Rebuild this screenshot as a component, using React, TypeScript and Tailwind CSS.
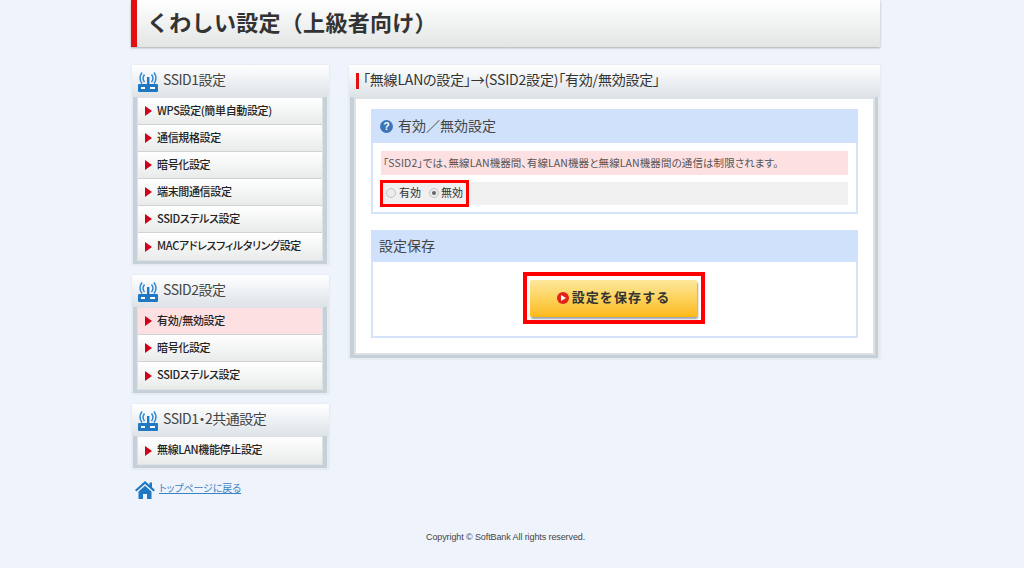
import React from "react";

const font = { fontFamily: '"Noto Sans CJK JP", "Liberation Sans", sans-serif' };

function RouterIcon() {
  return (
    <svg width="20" height="20" viewBox="0 0 20 20" className="shrink-0 mt-[1px]">
      <rect x="0" y="12" width="20" height="8" rx="1" fill="#1f78c4" />
      <rect x="3" y="15" width="4" height="2" fill="#fff" />
      <rect x="12" y="15" width="5" height="2" fill="#fff" />
      <rect x="9" y="5" width="2.4" height="7" fill="#1f78c4" />
      <path d="M5.5 2.5C3.5 5 3.5 7.5 5.5 10M3 0.5C0.5 4 0.5 8 3 11.5" fill="none" stroke="#2f8ad6" strokeWidth="1.5" transform="translate(1 0)" />
      <path d="M14.5 2.5C16.5 5 16.5 7.5 14.5 10M17 0.5C19.5 4 19.5 8 17 11.5" fill="none" stroke="#2f8ad6" strokeWidth="1.5" transform="translate(-1 0)" />
    </svg>
  );
}

function MenuItem({ label, active, last }: { label: string; active?: boolean; last?: boolean }) {
  return (
    <div
      className={`h-[27px] flex items-center pl-[7px] gap-[5px] text-[11px] font-medium text-[#222] tracking-[-0.35px] [font-feature-settings:'palt'] ${
        last ? "" : "border-b border-[#cfd3d6]"
      } ${active ? "bg-[#fde0e2]" : "bg-gradient-to-b from-white to-[#e9ebeb]"}`}
    >
      <span className="w-0 h-0 border-y-[5px] border-y-transparent border-l-[7px] border-l-[#d0021b]" />
      <span className="pb-[2px]">{label}</span>
    </div>
  );
}

function SideGroup({ title, items, activeIndex }: { title: string; items: string[]; activeIndex?: number }) {
  return (
    <div className="w-[197px] rounded-t-[2px] bg-[#e6ebf0] shadow-[0_0_2px_#d5dbe3]">
      <div className="h-[32px] flex items-center pl-[6px] gap-[5px] bg-gradient-to-b from-white to-[#dde3e8] text-[14px] text-[#444] tracking-[-0.5px] [font-feature-settings:'palt']">
        <RouterIcon />
        <span className="pb-[3px]">{title}</span>
      </div>
      <div className="ml-[1px] mr-[2px] pl-[4px] pr-[4px] pb-[3px] bg-[#c5d0d9] mb-[1px]">
        <div className="border border-[#dfe2e4] bg-white">
          {items.map((it, i) => (
            <MenuItem key={it} label={it} active={i === activeIndex} last={i === items.length - 1} />
          ))}
        </div>
      </div>
    </div>
  );
}

function BlueHeader({ children, h }: { children: React.ReactNode; h: string }) {
  return <div className={`${h} bg-[#d0e2fb] flex items-center text-[14px] text-[#444]`}>{children}</div>;
}

export default function App() {
  return (
    <div className="w-[1024px] h-[568px] overflow-hidden bg-[#eff3fb]" style={font}>
      <div className="ml-[131px] w-[749px] h-[47px] flex items-center border-l-[6px] border-[#e30f0f] bg-gradient-to-b from-white to-[#e3e5e5] shadow-[0_1px_2px_#a9adb1]">
        <h1 className="ml-[10px] pb-[5px] text-[22px] font-bold leading-none text-[#333] tracking-[0.3px]">くわしい設定（上級者向け）</h1>
      </div>

      <div className="ml-[132px] mt-[18px] flex gap-[20px] items-start">
        <div className="w-[197px] flex flex-col gap-[10px]">
          <SideGroup
            title="SSID1設定"
            items={["WPS設定(簡単自動設定)", "通信規格設定", "暗号化設定", "端末間通信設定", "SSIDステルス設定", "MACアドレスフィルタリング設定"]}
          />
          <SideGroup title="SSID2設定" items={["有効/無効設定", "暗号化設定", "SSIDステルス設定"]} activeIndex={0} />
          <SideGroup title="SSID1・2共通設定" items={["無線LAN機能停止設定"]} />
          <div className="flex items-center gap-[4px] ml-[3px] mt-[2px]">
            <svg width="20" height="18" viewBox="0 0 20 18" className="shrink-0">
              <path d="M10 0L0 9l1.4 1.6L10 3l8.6 7.6L20 9l-3-2.7V1.5h-2.5v2.6z" fill="#1f78c4" />
              <path d="M3.5 10.5L10 4.8l6.5 5.7V18H12v-5H8v5H3.5z" fill="#1f78c4" />
            </svg>
            <a className="text-[10px] text-[#3c83c4] underline tracking-[-0.1px] -mt-[5px] [font-feature-settings:'palt']">トップページに戻る</a>
          </div>
        </div>

        <div className="w-[531px] rounded-t-[2px] bg-[#e6ebf0] shadow-[0_0_2px_#d5dbe3]">
          <div className="h-[32px] flex items-center pl-[7px] bg-gradient-to-b from-white to-[#dde3e8] text-[14px] text-[#333] tracking-[-0.2px] [font-feature-settings:'palt']">
            <span className="w-[3px] h-[16px] bg-[#e30f0f] mr-[4px]" />
            <span className="pb-[3px]">「無線LANの設定」→(SSID2設定)「有効/無効設定」</span>
          </div>
          <div className="ml-[1px] mr-[2px] pl-[4px] pr-[3px] pb-[3px] mb-[1px] bg-[#c5d0d9]">
            <div className="border-[2px] border-[#dfe2e4] bg-white px-[15px] pt-[10px] pb-[15px] h-[258px]">
              <div className="border-[2px] border-t-0 border-[#d5e4fa] h-[105px]">
                <BlueHeader h="h-[34px] -mx-[2px]">
                  <svg width="13" height="13" viewBox="0 0 13 13" className="ml-[9px] mr-[5px] shrink-0">
                    <circle cx="6.5" cy="6.5" r="6.5" fill="#3b74b8" />
                    <text x="6.5" y="10" fontSize="10" fontWeight="700" fill="#fff" textAnchor="middle" fontFamily="Liberation Sans">?</text>
                  </svg>
                  <span className="pb-[2px]">有効／無効設定</span>
                </BlueHeader>
                <div className="mx-[8px] mt-[8px] h-[24px] bg-[#fde0e2] flex items-center pl-[2px] text-[10.5px] text-[#555] tracking-[0.1px] [font-feature-settings:'palt']">
                  <span className="pb-[1px]">「SSID2」では、無線LAN機器間、有線LAN機器と無線LAN機器間の通信は制限されます。</span>
                </div>
                <div className="mx-[8px] mt-[7px] h-[23px] bg-[#f0f0f0] flex items-center">
                  <div className="h-[27px] w-[89px] -ml-[1px] border-[3px] border-[#ff0000] flex items-center pl-[3px] text-[11px] text-[#333]">
                    <span className="w-[10px] h-[10px] rounded-full border border-[#c4c4c4] bg-[#ececec] mr-[3px] -mt-[1px]" />
                    <span className="pb-[2px]">有効</span>
                    <span className="ml-[8px] w-[10px] h-[10px] rounded-full border border-[#c4c4c4] bg-[#ececec] mr-[2px] -mt-[1px] flex items-center justify-center">
                      <span className="w-[4px] h-[4px] rounded-full bg-[#666]" />
                    </span>
                    <span className="pb-[2px]">無効</span>
                  </div>
                </div>
              </div>
              <div className="mt-[16px] border-[2px] border-t-0 border-[#d5e4fa] h-[108px]">
                <BlueHeader h="h-[32px] -mx-[2px]">
                  <span className="ml-[8px] pb-[2px]">設定保存</span>
                </BlueHeader>
                <div className="mt-[10px] ml-[150px] w-[182px] h-[52px] border-[4px] border-[#ff0000] flex items-center pl-[3px]">
                  <button className="w-[167px] h-[37px] rounded-[2px] bg-gradient-to-b from-[#fce79a] via-[#fdd25a] to-[#fdb90b] shadow-[1px_2px_2px_#9ca3af] flex items-center justify-center gap-[3px] text-[13px] font-bold text-[#333] tracking-[1.1px]">
                    <span className="w-[12px] h-[12px] rounded-full bg-[#e2231a] flex items-center justify-center">
                      <span className="w-0 h-0 ml-[1px] border-y-[3px] border-y-transparent border-l-[5px] border-l-white" />
                    </span>
                    <span className="pb-[2px]">設定を保存する</span>
                  </button>
                </div>
              </div>
            </div>
          </div>
        </div>
      </div>

      <p className="mt-[32px] ml-[426px] text-[9px] text-[#444] tracking-[-0.1px]" style={{ fontFamily: '"Liberation Sans", sans-serif' }}>
        Copyright © SoftBank All rights reserved.
      </p>
    </div>
  );
}
